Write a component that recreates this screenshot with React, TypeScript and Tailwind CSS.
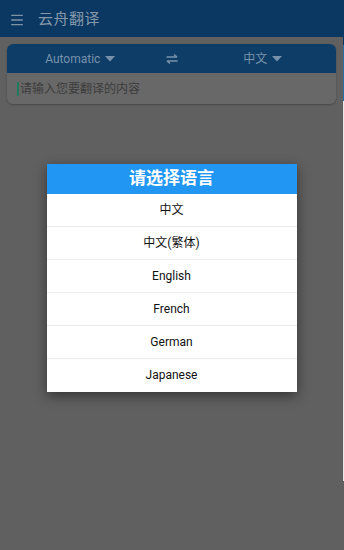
import { Menu } from "lucide-react";

const LANGS = ["中文", "中文(繁体)", "English", "French", "German", "Japanese"];

const font = "font-['Roboto','Noto_Sans_CJK_SC',sans-serif]";

function Caret({ className }: { className: string }) {
  return (
    <svg width="10" height="6" viewBox="0 0 10 6" className={className}>
      <path d="M0 0h10L5 5.5z" fill="currentColor" />
    </svg>
  );
}

function SwapIcon() {
  return (
    <svg width="12" height="10" viewBox="0 0 12 10" fill="none" stroke="currentColor" strokeWidth="1.4">
      <path d="M0.5 3h10.5M8 0.5 11 3" />
      <path d="M11.5 7H1M4 9.5 1 7" />
    </svg>
  );
}

export default function App() {
  return (
    <div className={`flex h-[550px] w-[344px] bg-[#606060] ${font}`}>
      <div className="relative flex h-full w-[343px] flex-col bg-[#606060]">
        {/* App bar */}
        <div className="flex h-[37px] shrink-0 items-center gap-[13px] bg-[#0b3862] pl-[9px] pt-[2px]">
          <Menu size={16} strokeWidth={2} className="text-[#7d93a8]" />
          <span className="text-[15px] tracking-[0.5px] text-[#8598ab]">云舟翻译</span>
        </div>

        {/* Translate card */}
        <div className="mx-[7px] mt-[7px] overflow-hidden rounded-[6px] bg-[#686868] shadow-[0_1px_2px_rgba(0,0,0,0.25)]">
          <div className="grid h-[29px] grid-cols-[1fr_40px_1fr] items-center bg-[#0e3d67] text-[12px] text-[#7892ac]">
            <div className="flex items-center justify-center gap-[5px] pl-[2px]">
              <span>Automatic</span>
              <Caret className="text-[#7892ac]" />
            </div>
            <div className="flex justify-center">
              <SwapIcon />
            </div>
            <div className="flex items-center justify-center gap-[5px] pr-[2px]">
              <span>中文</span>
              <Caret className="text-[#7892ac]" />
            </div>
          </div>
          <div className="flex h-[31px] items-center pl-[10px]">
            <span className="mr-[1px] h-[14px] w-[2px] bg-[#1f7a5e]" />
            <span className="text-[12px] text-[#3c3c3c]">请输入您要翻译的内容</span>
          </div>
        </div>

        {/* Dialog */}
        <div className="absolute inset-0 flex items-center justify-center pt-[5px]">
          <div className="w-[250px] bg-white shadow-[0_4px_12px_rgba(0,0,0,0.45)]">
            <div className="flex h-[30px] items-center justify-center bg-[#2196f3] text-[17px] font-bold text-white">
              请选择语言
            </div>
            {LANGS.map((l, i) => (
              <div
                key={l}
                className={`flex h-[33px] items-center justify-center text-[12px] text-[#111] ${
                  i < LANGS.length - 1 ? "border-b border-[#ececec]" : ""
                }`}
              >
                {l}
              </div>
            ))}
          </div>
        </div>
      </div>
      {/* sliver of the window behind */}
      <div className="flex h-full w-px flex-col">
        <div className="h-[45px] bg-[#0b3862]" />
        <div className="h-[56px] bg-[#2a6ea8]" />
        <div className="h-[380px] bg-[#e6e6e6]" />
        <div className="flex-1 bg-[#606060]" />
      </div>
    </div>
  );
}
